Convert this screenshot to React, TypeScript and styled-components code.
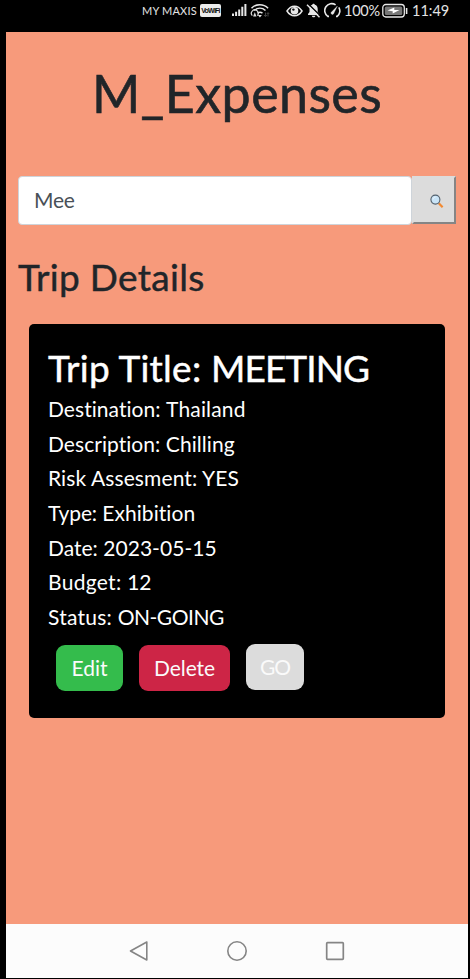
import React from "react";
import styled, { createGlobalStyle } from "styled-components";

const GlobalStyle = createGlobalStyle`
  *, *::before, *::after { box-sizing: border-box; }
  html, body { margin: 0; padding: 0; background: #000; }
  body { font-family: Lato, "Open Sans", sans-serif; font-variant-ligatures: none; overflow: hidden; }
  h1, h2, h3, p { margin: 0; font-weight: 400; }
`;

const Device = styled.div`
  width: 470px;
  height: 979px;
  display: flex;
  flex-direction: column;
  padding: 0 2px 1px 6px;
  background: #000;
`;

const StatusBar = styled.header`
  height: 32px;
  flex: none;
  display: flex;
  align-items: flex-start;
  padding: 2px 0 0 136px;
  color: #e4e4e4;
  svg { flex: none; display: block; }
`;

const StatusText = styled.span<{ $size: number; $width: number; $spacing?: number }>`
  font-size: ${(p) => p.$size}px;
  width: ${(p) => p.$width}px;
  letter-spacing: ${(p) => p.$spacing ?? 0}px;
  line-height: 18px;
  white-space: nowrap;
  flex: none;
`;

const WifiCallingBadge = styled.span`
  width: 21px;
  height: 13px;
  margin: 2px 11px 0 0;
  flex: none;
  border-radius: 2px;
  background: #ececec;
  color: #111;
  font: 700 7px/13px "Liberation Sans", sans-serif;
  letter-spacing: -0.75px;
  text-align: center;
  white-space: nowrap;
`;

const Screen = styled.main`
  flex: 1;
  min-height: 0;
  display: flex;
  flex-direction: column;
  background: #f79a7b;
  padding: 30px 12px 0;
`;

const AppTitle = styled.h1`
  font-size: 52px;
  line-height: 62px;
  letter-spacing: 0.4px;
  text-align: center;
  color: #212529;
  -webkit-text-stroke: 0.6px #212529;
`;

const SearchForm = styled.form`
  display: flex;
  height: 49px;
  margin-top: 52px;
  width: 438px;
`;

const SearchInput = styled.input`
  width: 394px;
  height: 49px;
  padding: 0 15px 2px;
  border: 1px solid #ced4da;
  border-radius: 4px;
  background: #fff;
  color: #495057;
  font: 21px/30px Lato, sans-serif;
  letter-spacing: -0.2px;
  outline: none;
`;

const SearchButton = styled.button`
  flex: 1;
  height: 48px;
  display: flex;
  padding: 16px 0 0 16px;
  background: #dcdcdc;
  border: 2px solid;
  border-color: #dcdcdc #858585 #858585 #dcdcdc;
`;

const SectionTitle = styled.h2`
  margin-top: 30px;
  font-size: 37px;
  line-height: 44px;
  letter-spacing: 0.3px;
  color: #212529;
  -webkit-text-stroke: 0.45px #212529;
`;

const Card = styled.article`
  width: 416px;
  height: 394px;
  margin: 25px 0 0 11px;
  padding: 23px 19px 0;
  border-radius: 5px;
  background: #000;
  color: #fff;
`;

const CardTitle = styled.h3`
  font-size: 37px;
  line-height: 42px;
  letter-spacing: 0.25px;
  margin-bottom: 3px;
  white-space: nowrap;
  -webkit-text-stroke: 0.45px #fff;
`;

const DetailRow = styled.p<{ $spacing: number }>`
  font-size: 21px;
  line-height: 34.65px;
  letter-spacing: ${(p) => p.$spacing}px;
  white-space: nowrap;
`;

const Value = styled.span<{ $spacing: number }>`
  letter-spacing: ${(p) => p.$spacing}px;
`;

const Actions = styled.div`
  display: flex;
  align-items: flex-start;
  padding: 10px 0 0 8px;
`;

const ActionButton = styled.button<{ $bg: string; $width: number; $gap: number; $spacing?: number; $raised?: boolean }>`
  width: ${(p) => p.$width}px;
  height: 46px;
  margin: ${(p) => (p.$raised ? "-1px" : "0")} ${(p) => p.$gap}px 0 0;
  padding: 1px 0 0;
  border: 0;
  border-radius: 9px;
  background: ${(p) => p.$bg};
  color: #fafafa;
  font: 21px/30px Lato, sans-serif;
  letter-spacing: ${(p) => p.$spacing ?? 0}px;
`;

const NavBar = styled.nav`
  height: 54px;
  flex: none;
  display: flex;
  justify-content: center;
  gap: 78px;
  padding-top: 17px;
  background: #fcfcfc;
  svg { display: block; }
`;

const details = [
  { label: "Destination:", value: "Thailand", labelSpacing: 0.05, valueSpacing: 0.15 },
  { label: "Description:", value: "Chilling", labelSpacing: 0.05, valueSpacing: 0.05 },
  { label: "Risk Assesment:", value: "YES", labelSpacing: 0.1, valueSpacing: 0.1 },
  { label: "Type:", value: "Exhibition", labelSpacing: -0.1, valueSpacing: 0.05 },
  { label: "Date:", value: "2023-05-15", labelSpacing: 0, valueSpacing: 0.05 },
  { label: "Budget:", value: "12", labelSpacing: 0.3, valueSpacing: -0.2 },
  { label: "Status:", value: "ON-GOING", labelSpacing: 0.25, valueSpacing: -0.5 },
];

const SignalIcons = () => (
  <svg width="54" height="18" viewBox="0 0 54 18" fill="none">
    <path d="M1 14v-2.5M4.1 14V9.8M7.2 14V7.5M10.3 14V4.8M13.4 14V2" stroke="#e6e6e6" strokeWidth="2" />
    <path d="M19.5 6.2c4.6-4.7 12-4.7 16.6 0M22.2 8.5c3.4-3 8-3 11.3 0M25.5 11.2c1.8-1.3 3.3-1.3 5 0" stroke="#e6e6e6" strokeWidth="1.5" />
    <path d="M27.9 15.5l-2-2.4h4z" fill="#e6e6e6" />
    <path d="M20.3 13.6a3.4 3.4 0 1 1 5 0M22 13.8l.8-2 .8 2z" stroke="#ddd" strokeWidth="1.2" />
    <path d="M33.5 10.5v4M32 13l1.5 1.7L35 13M36 14.5v-3.6M34.8 12l1.2-1.4 1.2 1.4" stroke="#444" />
  </svg>
);

const EyeIcon = () => (
  <svg width="20" height="18" viewBox="0 0 20 18" fill="none">
    <path d="M1 9c4-6.4 11-6.4 15 0-4 6.4-11 6.4-15 0z" stroke="#e8e8e8" strokeWidth="1.5" />
    <circle cx="8.5" cy="8.8" r="3.8" fill="#e8e8e8" />
    <circle cx="7.4" cy="7.6" r="1.2" fill="#111" />
  </svg>
);

const MutedBellIcon = () => (
  <svg width="18" height="18" viewBox="0 0 18 18" fill="none">
    <path d="M2 13V12l1.5-2V7c0-2.2 1-3.6 2.8-4.2C6.5 1.4 8.6 1.4 8.8 2.8c2 .6 2.9 2 2.9 4.2v3l1.6 2v1zM5.8 13.8h3.6c-.5 2-3.1 2-3.6 0z" fill="#e8e8e8" />
    <path d="M2.1 1.7l12.5 12.4" stroke="#000" strokeWidth="1.4" />
    <path d="M1 2.8l12.5 12.4" stroke="#e8e8e8" strokeWidth="1.4" />
  </svg>
);

const GaugeIcon = () => (
  <svg width="20" height="18" viewBox="0 0 20 18" fill="none" stroke="#e8e8e8" strokeWidth="1.6">
    <path d="M5 14.4H3.8A6.8 6.8 0 0 1 11.6 2.8M14.8 5.4a6.8 6.8 0 0 1-1.6 9H12" />
    <path d="M7 10.6L13.4 4 9.5 12A1.5 1.5 0 0 1 7 10.6z" fill="#e8e8e8" strokeWidth=".3" />
  </svg>
);

const BatteryIcon = () => (
  <svg width="31" height="18" viewBox="0 0 31 18" fill="none">
    <rect x="1.8" y="2.5" width="21.5" height="12.5" rx="3" stroke="#e8e8e8" strokeWidth="1.3" />
    <rect x="3.8" y="4.5" width="17.5" height="8.5" rx="1.5" fill="#777" />
    <path d="M6.5 8.5l6.8-2.9v2.3h5.2l-6.8 3.7V9.2z" fill="#fff" />
    <path d="M25.6 6v6" stroke="#e8e8e8" strokeWidth="1.6" />
  </svg>
);

const MagnifierIcon = () => (
  <svg width="14" height="15" viewBox="0 0 14 15" fill="none">
    <path d="M8.8 9.2l3.8 4" stroke="#f28a32" strokeWidth="2.2" />
    <circle cx="5.4" cy="5.6" r="4.5" fill="#c9e4f7" stroke="#53616d" strokeWidth="1.1" />
    <path d="M3 5.4c.2-1.4 1.1-2.2 2.5-2.3" stroke="#f2faff" />
  </svg>
);

export default function App() {
  return (
    <>
      <GlobalStyle />
      <Device>
        <StatusBar>
          <StatusText $size={11} $width={58} $spacing={0.2}>MY MAXIS</StatusText>
          <WifiCallingBadge>VoWiFi</WifiCallingBadge>
          <SignalIcons />
          <EyeIcon />
          <MutedBellIcon />
          <GaugeIcon />
          <StatusText $size={14.5} $width={37} $spacing={-0.25}>100%</StatusText>
          <BatteryIcon />
          <StatusText $size={14.5} $width={40}>11:49</StatusText>
        </StatusBar>
        <Screen>
          <AppTitle>M_Expenses</AppTitle>
          <SearchForm onSubmit={(e) => e.preventDefault()}>
            <SearchInput defaultValue="Mee" aria-label="Search trips" />
            <SearchButton type="submit" aria-label="Search">
              <MagnifierIcon />
            </SearchButton>
          </SearchForm>
          <SectionTitle>Trip Details</SectionTitle>
          <Card>
            <CardTitle>
              Trip Title: <Value $spacing={-0.95}>MEETING</Value>
            </CardTitle>
            {details.map((d) => (
              <DetailRow key={d.label} $spacing={d.labelSpacing}>
                {d.label} <Value $spacing={d.valueSpacing}>{d.value}</Value>
              </DetailRow>
            ))}
            <Actions>
              <ActionButton $bg="#34bc4c" $width={67} $gap={16}>Edit</ActionButton>
              <ActionButton $bg="#cd2546" $width={91} $gap={16} $spacing={-0.1}>Delete</ActionButton>
              <ActionButton $bg="#dcdcdc" $width={58} $gap={0} $spacing={-1} $raised>GO</ActionButton>
            </Actions>
          </Card>
        </Screen>
        <NavBar>
          <svg width="20" height="20" viewBox="0 0 20 20" fill="none" stroke="#858585" strokeWidth="1.6" strokeLinejoin="round">
            <path d="M1.5 10L17.8 1v18z" />
          </svg>
          <svg width="20" height="20" viewBox="0 0 20 20" fill="none" stroke="#858585" strokeWidth="1.6">
            <circle cx="10" cy="10" r="9.2" />
          </svg>
          <svg width="20" height="20" viewBox="0 0 20 20" fill="none" stroke="#858585" strokeWidth="1.7">
            <rect x="1.7" y="1.7" width="16.6" height="16.6" rx=".8" />
          </svg>
        </NavBar>
      </Device>
    </>
  );
}
